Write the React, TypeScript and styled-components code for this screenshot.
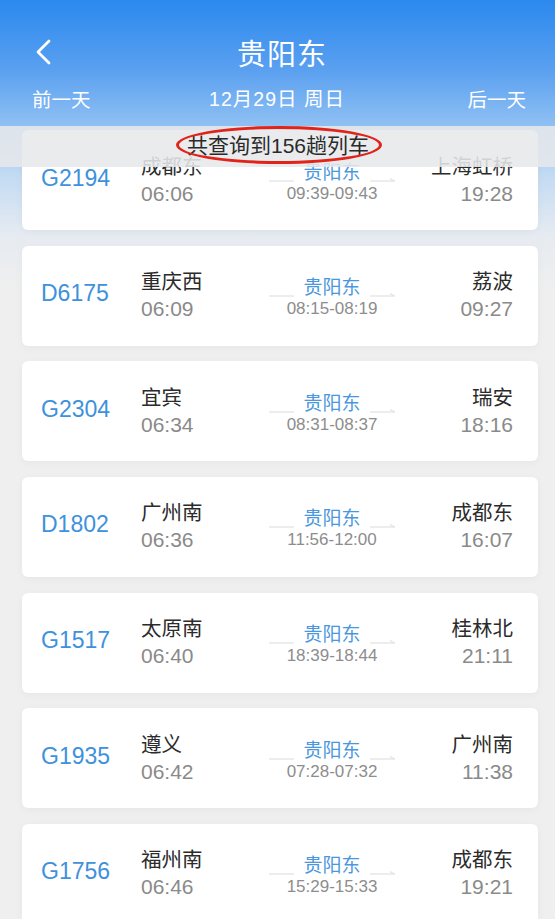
import styled, { createGlobalStyle } from "styled-components";

type Train = {
  no: string
  from: string
  dep: string
  stop: string
  to: string
  arr: string
}

const trains: Train[] = [
  { no: "G2194", from: "成都东", dep: "06:06", stop: "09:39-09:43", to: "上海虹桥", arr: "19:28" },
  { no: "D6175", from: "重庆西", dep: "06:09", stop: "08:15-08:19", to: "荔波", arr: "09:27" },
  { no: "G2304", from: "宜宾", dep: "06:34", stop: "08:31-08:37", to: "瑞安", arr: "18:16" },
  { no: "D1802", from: "广州南", dep: "06:36", stop: "11:56-12:00", to: "成都东", arr: "16:07" },
  { no: "G1517", from: "太原南", dep: "06:40", stop: "18:39-18:44", to: "桂林北", arr: "21:11" },
  { no: "G1935", from: "遵义", dep: "06:42", stop: "07:28-07:32", to: "广州南", arr: "11:38" },
  { no: "G1756", from: "福州南", dep: "06:46", stop: "15:29-15:33", to: "成都东", arr: "19:21" },
];

const GlobalStyle = createGlobalStyle`
  html, body {
    margin: 0;
    padding: 0;
    background: #efefef;
  }
  body {
    font-family: "Liberation Sans", "Noto Sans CJK SC", sans-serif;
    overflow: hidden;
  }
`

const Page = styled.div`
  position: relative;
  width: 555px;
  height: 919px;
  overflow: hidden;
  background: linear-gradient(
    to bottom,
    #2b89ee 0px,
    #5aa0f0 70px,
    #8fc0f3 125px,
    #c3dbf3 175px,
    #e6ebf1 235px,
    #efefef 290px
  );
`

const Header = styled.header`
  display: flex;
  flex-direction: column;
  padding: 27px 29px 0 32px;
  height: 102px;
  color: #fff;
`

const TitleRow = styled.div`
  display: grid;
  grid-template-columns: 70px 1fr 70px;
  align-items: center;
  height: 50px;
`

const BackButton = styled.button`
  background: none;
  border: none;
  padding: 0 0 0 2px;
  display: flex;
  align-items: center;
  cursor: pointer;
`

const Title = styled.h1`
  margin: 0;
  text-align: center;
  font-family: "Noto Sans CJK SC", sans-serif;
  font-weight: 400;
  font-size: 29px;
  letter-spacing: 1px;
  padding-left: 6px;
`

const DateRow = styled.div`
  display: flex;
  align-items: center;
  justify-content: space-between;
  margin-top: 9px;
  font-size: 19.5px;
  line-height: 26px;
`

const DayLink = styled.span`
  font-family: "Noto Sans CJK SC", sans-serif;
`

const DateText = styled.span`
  letter-spacing: 1px;
  margin-right: 4px;
`

const Notice = styled.div`
  position: absolute;
  left: 0;
  right: 0;
  top: 126px;
  height: 41px;
  display: flex;
  align-items: center;
  justify-content: center;
  background: rgba(231, 232, 235, 0.88);
  font-size: 21px;
  line-height: 25px;
  color: #2a2a2a;
  z-index: 2;
`

const NoticeText = styled.span`
  position: relative;
  padding-left: 1px;
  margin-top: -2px;
`

const Circle = styled.span`
  position: absolute;
  left: -10px;
  right: -13px;
  top: -7px;
  bottom: -6px;
  border: 3px solid #e2231a;
  border-radius: 50%;
`

const List = styled.div`
  display: flex;
  flex-direction: column;
  gap: 15.67px;
  padding: 1px 17px 0 22px;
`

const Card = styled.div`
  height: 100px;
  background: #fff;
  border-radius: 6px;
  box-shadow: 0 2px 8px rgba(0, 0, 0, 0.04);
  display: grid;
  grid-template-columns: 100px 111px 160px 1fr;
  align-items: center;
  padding: 0 25px 0 19px;
`

const TrainNo = styled.div`
  color: #3d91dd;
  font-size: 23px;
  margin-top: -4px;
`

const Stop = styled.div<{ $end?: boolean }>`
  display: flex;
  flex-direction: column;
  align-items: ${({ $end }) => ($end ? "flex-end" : "flex-start")};
  gap: 3px;
  margin-top: -2px;
`

const Station = styled.div`
  font-family: "Noto Sans CJK SC", sans-serif;
  font-size: 20.5px;
  line-height: 26px;
  color: #2b2b2b;
`

const Time = styled.div`
  font-size: 21px;
  line-height: 26px;
  color: #8a8a8a;
`

const Via = styled.div`
  display: flex;
  flex-direction: column;
  align-items: center;
  margin-top: 2px;
`

const ViaRow = styled.div`
  display: flex;
  align-items: flex-end;
  gap: 9px;
`

const ViaName = styled.span`
  font-family: "Noto Sans CJK SC", sans-serif;
  color: #4a97de;
  font-size: 19px;
  line-height: 25px;
`

const ViaTime = styled.span`
  color: #8d8d8d;
  font-size: 17px;
  line-height: 22px;
`

const Line = ({ arrow }: { arrow?: boolean }) => (
  <svg width="25" height="6" viewBox="0 0 25 6" style={{ marginBottom: 1 }}>
    <line x1="0" y1="5" x2="25" y2="5" stroke="#e2e4e8" strokeWidth="1.3" />
    {arrow && <line x1="20" y1="2.6" x2="24.6" y2="5" stroke="#e2e4e8" strokeWidth="1.3" />}
  </svg>
)

const TrainCard = ({ t }: { t: Train }) => (
  <Card>
    <TrainNo>{t.no}</TrainNo>
    <Stop>
      <Station>{t.from}</Station>
      <Time>{t.dep}</Time>
    </Stop>
    <Via>
      <ViaRow>
        <Line />
        <ViaName>贵阳东</ViaName>
        <Line arrow />
      </ViaRow>
      <ViaTime>{t.stop}</ViaTime>
    </Via>
    <Stop $end>
      <Station>{t.to}</Station>
      <Time>{t.arr}</Time>
    </Stop>
  </Card>
)

export default function App() {
  return (
    <>
      <GlobalStyle />
      <Page>
        <Header>
          <TitleRow>
            <BackButton aria-label="返回">
              <svg width="18" height="26" viewBox="0 0 18 26">
                <path d="M15 2 L4 13 L15 24" fill="none" stroke="#fff" strokeWidth="2.8" strokeLinecap="round" strokeLinejoin="round" />
              </svg>
            </BackButton>
            <Title>贵阳东</Title>
            <span />
          </TitleRow>
          <DateRow>
            <DayLink>前一天</DayLink>
            <DateText>12月29日 周日</DateText>
            <DayLink>后一天</DayLink>
          </DateRow>
        </Header>
        <Notice>
          <NoticeText>
            共查询到156趟列车
            <Circle />
          </NoticeText>
        </Notice>
        <List>
          {trains.map((t) => (
            <TrainCard key={t.no} t={t} />
          ))}
        </List>
      </Page>
    </>
  );
}
